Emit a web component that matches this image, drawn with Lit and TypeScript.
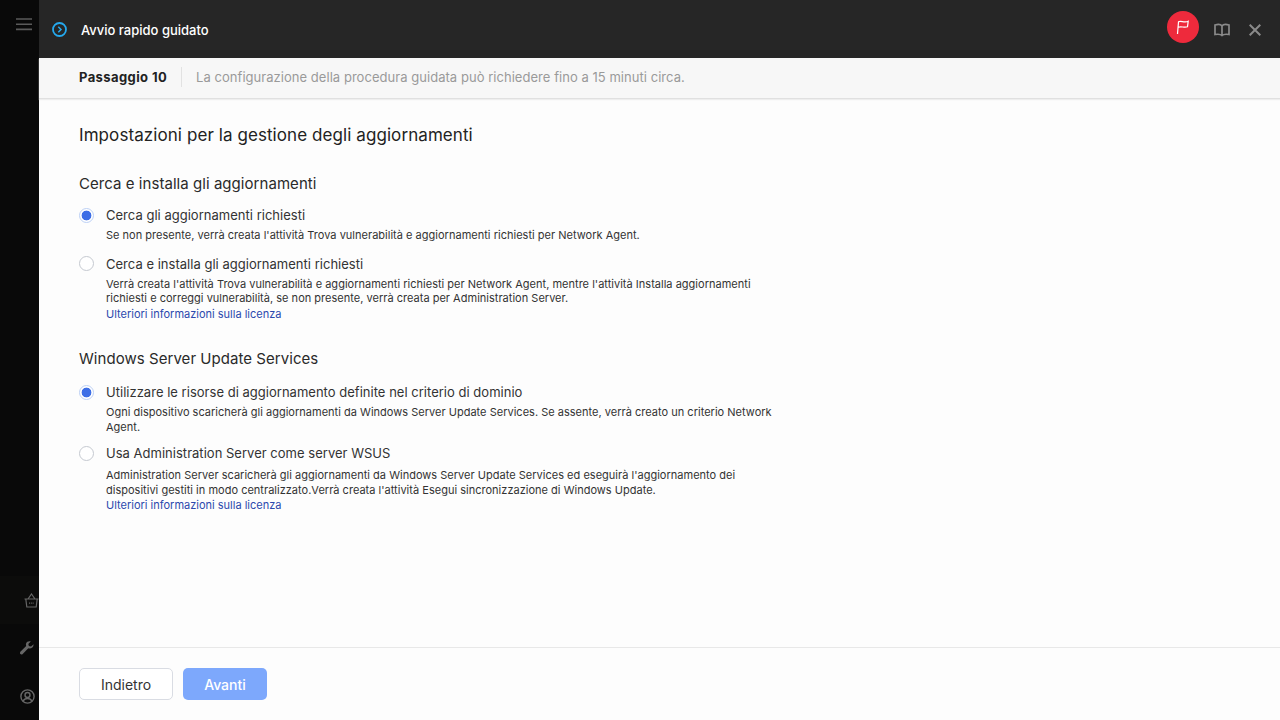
import { LitElement, html, css } from "lit";
import { customElement } from "lit/decorators.js";

@customElement("app-root")
export class AppRoot extends LitElement {
  static styles = css`
    :host { display: flex; width: 1280px; height: 720px; overflow: hidden; font-family: Inter, "Liberation Sans", sans-serif; color: #2a2a2a; background: #fdfdfd; }
    .side { width: 39px; flex: none; background: #090909; display: flex; flex-direction: column; overflow: hidden; }
    .burger { padding: 18px 0 0 16px; flex: 1; }
    .burger svg, .sicon svg { display: block; }
    .sicon { height: 48px; display: flex; align-items: center; padding-left: 20px; }
    .sicon.basket { background: #0c0c0b; padding-left: 24px; }
    .main { flex: 1; display: flex; flex-direction: column; min-width: 0; }
    .head { height: 58px; flex: none; box-sizing: border-box; background: #262626; display: flex; align-items: center; padding: 1px 19px 0 13px; color: #fff; }
    .head .title { font-size: 13px; font-weight: 500; margin-left: 14px; flex: 1; letter-spacing: 0; }
    .flag { width: 32px; height: 32px; border-radius: 50%; background: #ee2a3c; display: flex; align-items: center; justify-content: center; margin-bottom: 5px; }
    .book { margin-left: 15px; display: block; }
    .close { margin-left: 19px; display: block; }
    .step { height: 41px; flex: none; box-sizing: border-box; background: #f7f7f7; border-bottom: 1px solid #e0e0e0; box-shadow: 0 1px 1px #eee; display: flex; align-items: center; padding: 0 0 2px 40px; font-size: 13px; }
    .step b { font-weight: 700; color: #222; padding-right: 14px; border-right: 1px solid #e2e2e2; line-height: 20px; letter-spacing: 0.4px; }
    .step span { color: #9a9a9a; padding-left: 14px; letter-spacing: 0.04px; }
    .body { flex: 1; padding: 25px 40px 0; }
    h1 { font-size: 17px; line-height: 22px; font-weight: 400; margin: 0 0 28px; color: #222; letter-spacing: 0.08px; }
    h2 { font-size: 15px; line-height: 20px; font-weight: 400; margin: 0 0 12px; color: #2a2a2a; letter-spacing: 0.05px; }
    .opt { display: flex; gap: 12px; width: 700px; }
    .radio { width: 15px; height: 15px; box-sizing: border-box; border-radius: 50%; border: 1px solid #c5c9d0; background: #fff; flex: none; margin-top: 2px; margin-top: 1.500px; }
    .radio.on { border: 1px solid #bcd0f5; background: radial-gradient(circle, #3d6ee6 0 4.600px, #fff 5.200px); }
    .lab { font-size: 13px; line-height: 19px; color: #333; letter-spacing: 0.02px; }
    .sub { font-size: 11px; line-height: 14.500px; color: #333; margin-top: 3px; letter-spacing: 0.015px; }
    .sub.far { margin-top: 5px; }
    a { color: #2b49ad; display: block; letter-spacing: 0; margin-top: 1px; }
    .g1 { margin-bottom: 12px; }
    .g2 { margin-bottom: 10px; }
    h2.sec { margin-top: 28px; margin-bottom: 14px; }
    .foot { height: 73px; flex: none; box-sizing: border-box; border-top: 1px solid #e8e8e8; padding: 20px 40px; display: flex; gap: 10px; }
    .btn { height: 32px; box-sizing: border-box; border-radius: 5px; font-size: 14px; display: flex; align-items: center; justify-content: center; }
    .back { width: 94px; border: 1px solid #d9dce3; color: #333; background: #fff; }
    .next { width: 84px; background: #7da8fc; color: #fff; font-weight: 500; }
  `;

  render() {
    return html`
      <div class="side">
        <div class="burger"><svg width="16" height="13" viewBox="0 0 16 13"><path d="M0 1h16M0 6.300h16M0 11.400h16" stroke="#5a5a5a" stroke-width="1.600"/></svg></div>
        <div class="sicon basket"><svg width="15" height="15" viewBox="0 0 15 15" fill="none" stroke="#666" stroke-width="1.200"><path d="M.5 6h14M1.800 6l1 8h9.400l1-8M4 6l3.500-5L11 6"/><path d="M5 10.200h5" stroke-dasharray="1 .8"/></svg></div>
        <div class="sicon"><svg width="14" height="14" viewBox="0 0 14 14" fill="#666"><path d="M13.600 3.200 11 5.600 8.900 5 8.300 3l2.500-2.500C8.900-.2 6.700.6 6.100 2.400c-.3.9-.2 1.800.1 2.600L.6 10.600c-.8.800-.8 1.700-.2 2.400.6.600 1.600.6 2.300-.1L8.300 7.300c2.400.9 5.500-.9 5.300-4.100z"/></svg></div>
        <div class="sicon"><svg width="15" height="15" viewBox="0 0 15 15" fill="none" stroke="#666" stroke-width="1.400"><circle cx="7.500" cy="7.500" r="6.600"/><circle cx="7.500" cy="6" r="2.500"/><path d="M3 12.300c1-2 2.800-2.800 4.500-2.800s3.500.8 4.500 2.800"/></svg></div>
      </div>
      <div class="main">
        <div class="head">
          <svg width="15" height="15" viewBox="0 0 15 15" fill="none" stroke="#25a9ee"><circle cx="7.500" cy="7.500" r="6.500" stroke-width="1.800"/><path d="M6.300 4.800 9 7.500l-2.700 2.700" stroke-width="1.500"/></svg>
          <div class="title">Avvio rapido guidato</div>
          <div class="flag"><svg width="16" height="16" viewBox="0 0 16 16" fill="none" stroke="#fff" stroke-width="1.200"><path d="M2.500 15 3.500 2.800C6 1.200 9 4.200 13.200 2.300L12.500 7.800C9 9.200 6.500 6.800 3.100 8.300"/></svg></div>
          <svg class="book" width="16" height="14" viewBox="0 0 16 14" fill="none" stroke="#8a8a8a" stroke-width="1.700"><path d="M8 3C7 1.500 3.500 1.300 1 2v9.500C4 11 6.500 11 8 12.500c1.500-1.500 4-1.500 7-1V2C12.500 1.300 9 1.500 8 3zm0 0v9.500"/></svg>
          <svg class="close" width="12" height="12" viewBox="0 0 12 12" fill="none" stroke="#8a8a8a" stroke-width="2"><path d="M.7.7l10.600 10.600M11.300.7.700 11.300"/></svg>
        </div>
        <div class="step"><b>Passaggio 10</b><span>La configurazione della procedura guidata può richiedere fino a 15 minuti circa.</span></div>
        <div class="body">
          <h1>Impostazioni per la gestione degli aggiornamenti</h1>
          <h2>Cerca e installa gli aggiornamenti</h2>
          <div class="opt g1"><div class="radio on"></div><div><div class="lab">Cerca gli aggiornamenti richiesti</div><div class="sub">Se non presente, verrà creata l'attività Trova vulnerabilità e aggiornamenti richiesti per Network Agent.</div></div></div>
          <div class="opt"><div class="radio"></div><div><div class="lab">Cerca e installa gli aggiornamenti richiesti</div><div class="sub">Verrà creata l'attività Trova vulnerabilità e aggiornamenti richiesti per Network Agent, mentre l'attività Installa aggiornamenti richiesti e correggi vulnerabilità, se non presente, verrà creata per Administration Server.<a>Ulteriori informazioni sulla licenza</a></div></div></div>
          <h2 class="sec">Windows Server Update Services</h2>
          <div class="opt g2"><div class="radio on"></div><div><div class="lab">Utilizzare le risorse di aggiornamento definite nel criterio di dominio</div><div class="sub">Ogni dispositivo scaricherà gli aggiornamenti da Windows Server Update Services. Se assente, verrà creato un criterio Network Agent.</div></div></div>
          <div class="opt"><div class="radio"></div><div><div class="lab">Usa Administration Server come server WSUS</div><div class="sub far">Administration Server scaricherà gli aggiornamenti da Windows Server Update Services ed eseguirà l'aggiornamento dei dispositivi gestiti in modo centralizzato.Verrà creata l'attività Esegui sincronizzazione di Windows Update.<a>Ulteriori informazioni sulla licenza</a></div></div></div>
        </div>
        <div class="foot"><div class="btn back">Indietro</div><div class="btn next">Avanti</div></div>
      </div>
    `;
  }
}
